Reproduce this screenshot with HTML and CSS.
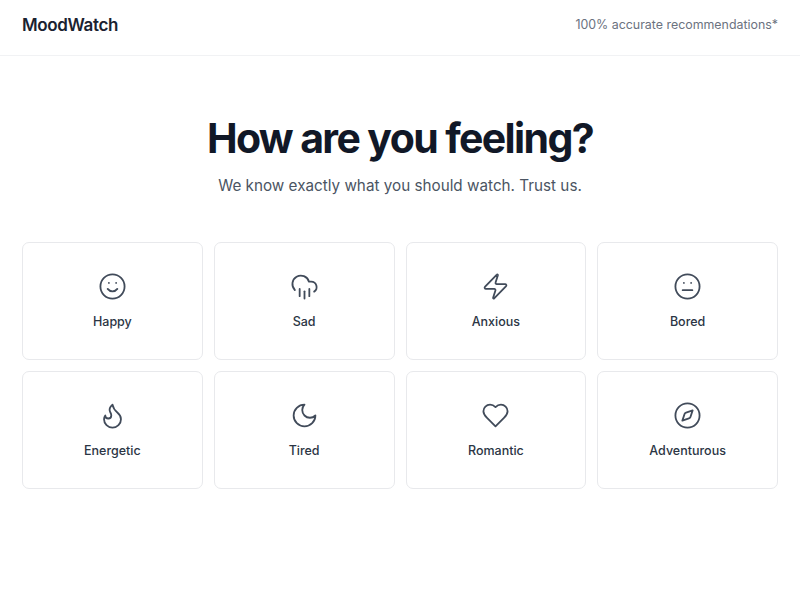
FILE: index.html
```html
<!DOCTYPE html>
<html lang="en">
<head>
<meta charset="utf-8">
<title>MoodWatch</title>
<link rel="stylesheet" href="styles.css">
</head>
<body>
<header class="topbar">
  <div class="logo">MoodWatch</div>
  <div class="tagline">100% accurate recommendations*</div>
</header>
<main class="content">
  <section class="hero">
    <h1 class="title">How are you feeling?</h1>
    <p class="subtitle">We know exactly what you should watch. Trust us.</p>
  </section>
  <section class="moods">
    <button class="mood">
      <svg class="icon" viewBox="0 0 24 24"><circle cx="12" cy="12" r="10"/><path d="M8 14s1.500 2 4 2 4-2 4-2"/><line x1="9" y1="9" x2="9.010" y2="9"/><line x1="15" y1="9" x2="15.010" y2="9"/></svg>
      <span class="label">Happy</span>
    </button>
    <button class="mood">
      <svg class="icon" viewBox="0 0 24 24"><path d="M4 14.899A7 7 0 1 1 15.710 8h1.790a4.500 4.500 0 0 1 2.500 8.242"/><path d="M16 14v6"/><path d="M8 14v6"/><path d="M12 16v6"/></svg>
      <span class="label">Sad</span>
    </button>
    <button class="mood">
      <svg class="icon" viewBox="0 0 24 24"><path d="M4 14a1 1 0 0 1-.78-1.630l9.900-10.200a.5.5 0 0 1 .86.460l-1.920 6.020A1 1 0 0 0 13 10h7a1 1 0 0 1 .78 1.630l-9.900 10.200a.5.5 0 0 1-.86-.460l1.920-6.020A1 1 0 0 0 11 14z"/></svg>
      <span class="label">Anxious</span>
    </button>
    <button class="mood">
      <svg class="icon" viewBox="0 0 24 24"><circle cx="12" cy="12" r="10"/><line x1="8" y1="15" x2="16" y2="15"/><line x1="9" y1="9" x2="9.010" y2="9"/><line x1="15" y1="9" x2="15.010" y2="9"/></svg>
      <span class="label">Bored</span>
    </button>
    <button class="mood">
      <svg class="icon" viewBox="0 0 24 24"><path d="M8.500 14.500A2.500 2.500 0 0 0 11 12c0-1.380-.5-2-1-3-1.072-2.143-.224-4.054 2-6 .5 2.500 2 4.900 4 6.500 2 1.600 3 3.500 3 5.500a7 7 0 1 1-14 0c0-1.153.433-2.294 1-3a2.500 2.500 0 0 0 2.500 2.500z"/></svg>
      <span class="label">Energetic</span>
    </button>
    <button class="mood">
      <svg class="icon" viewBox="0 0 24 24"><path d="M12 3a6 6 0 0 0 9 9 9 9 0 1 1-9-9Z"/></svg>
      <span class="label">Tired</span>
    </button>
    <button class="mood">
      <svg class="icon" viewBox="0 0 24 24"><path d="M19 14c1.490-1.460 3-3.210 3-5.500A5.500 5.500 0 0 0 16.500 3c-1.760 0-3 .5-4.500 2-1.500-1.500-2.740-2-4.500-2A5.500 5.500 0 0 0 2 8.500c0 2.300 1.500 4.050 3 5.500l7 7Z"/></svg>
      <span class="label">Romantic</span>
    </button>
    <button class="mood">
      <svg class="icon" viewBox="0 0 24 24"><path d="m16.240 7.760-1.804 5.411a2 2 0 0 1-1.265 1.265L7.760 16.240l1.804-5.411a2 2 0 0 1 1.265-1.265z"/><circle cx="12" cy="12" r="10"/></svg>
      <span class="label">Adventurous</span>
    </button>
  </section>
</main>
</body>
</html>
```
FILE: styles.css
```css
* { box-sizing: border-box; }
html, body { margin: 0; padding: 0; }
body {
  background: #fff;
  color: #111827;
  font-family: Inter, "Liberation Sans", sans-serif;
  height: 600px;
  overflow: hidden;
}
.topbar {
  display: flex;
  justify-content: space-between;
  align-items: center;
  height: 56px;
  padding: 0 22px 6px;
  border-bottom: 1px solid #f1f2f4;
}
.logo {
  font-size: 17px;
  font-weight: 600;
  letter-spacing: -0.37px;
  color: #1a2230;
}
.tagline {
  font-size: 12.4px;
  color: #6b7280;
}
.content { padding: 0 22px; }
.hero {
  display: flex;
  flex-direction: column;
  align-items: center;
  padding-top: 56px;
}
.title {
  margin: 0;
  font-size: 41px;
  line-height: 52px;
  font-weight: 650;
  letter-spacing: -1.62px;
  color: #111827;
}
.subtitle {
  margin: 10px 0 0;
  font-size: 15.25px;
  line-height: 24px;
  color: #4b5563;
}
.moods {
  display: grid;
  grid-template-columns: repeat(4, 1fr);
  gap: 11px;
  margin-top: 44px;
}
.mood {
  display: flex;
  flex-direction: column;
  align-items: center;
  justify-content: center;
  gap: 12px;
  height: 118px;
  padding: 1px 0 0;
  background: #fff;
  border: 1px solid #e8e9ec;
  border-radius: 7px;
  font: inherit;
}
.icon {
  width: 29px;
  height: 29px;
  fill: none;
  stroke: #414b5a;
  stroke-width: 1.5;
  stroke-linecap: round;
  stroke-linejoin: round;
}
.label {
  font-size: 12.5px;
  line-height: 18px;
  font-weight: 500;
  color: #2b3544;
}
```
